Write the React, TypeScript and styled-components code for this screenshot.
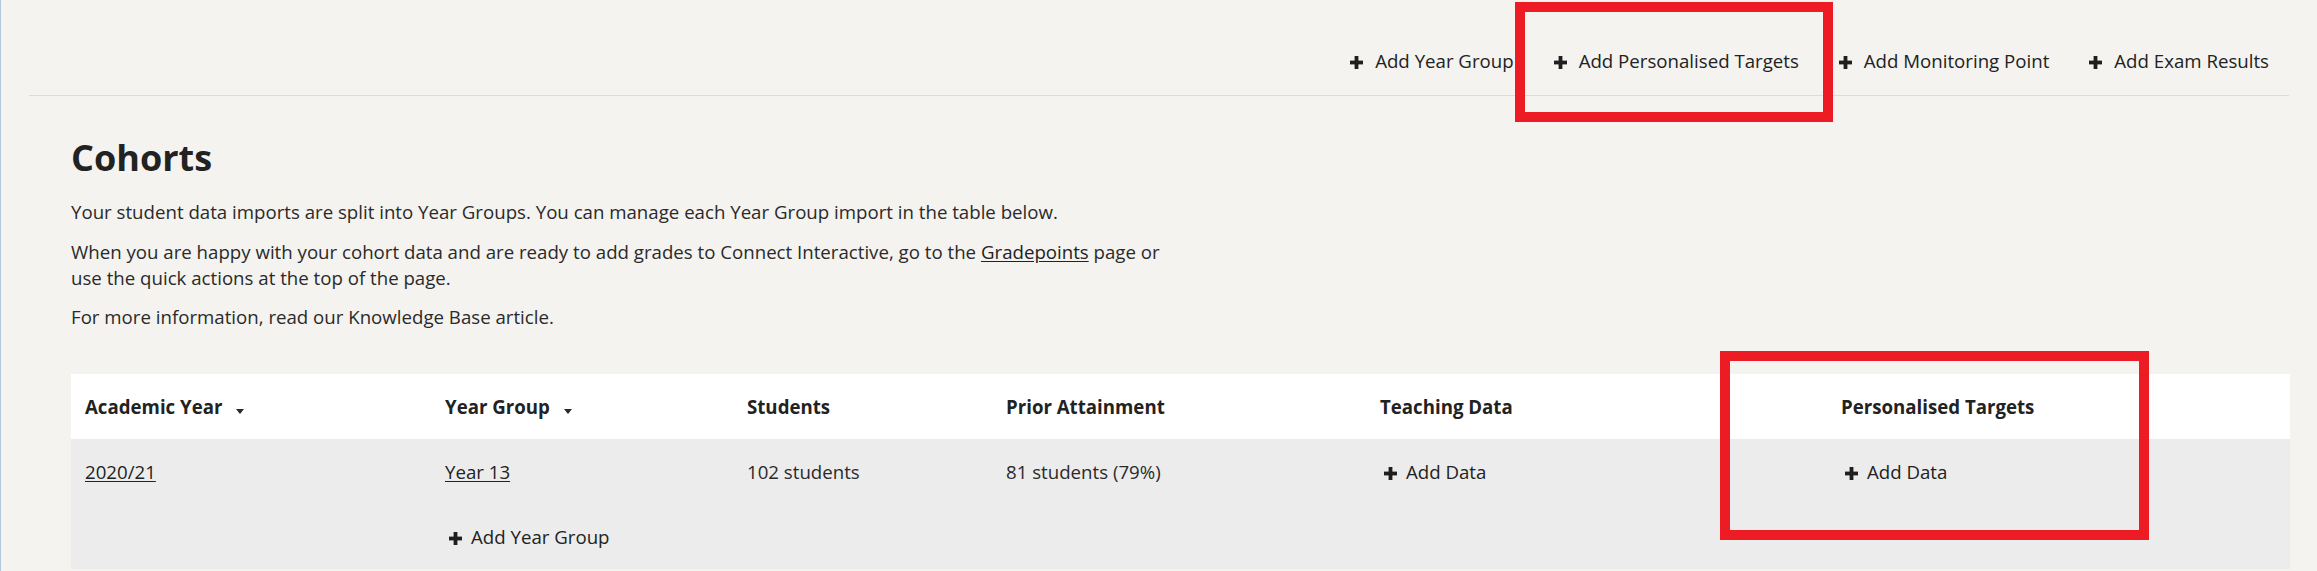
import React from "react";
import styled, { createGlobalStyle } from "styled-components";

const GlobalStyle = createGlobalStyle`
  html, body {
    margin: 0;
    padding: 0;
    background: #f4f3f0;
  }
  body {
    font-family: "Open Sans", "Liberation Sans", sans-serif;
    font-size: 18.67px;
    line-height: 26px;
    color: #222222;
  }
`;

const Page = styled.div`
  position: relative;
  width: 2317px;
  height: 571px;
  overflow: hidden;
  box-sizing: border-box;
  border-left: 1px solid #b3c7dc;
  background: #f4f3f0;
`;

const TopBar = styled.nav`
  display: flex;
  justify-content: flex-end;
  align-items: center;
  gap: 40px;
  margin: 0 28px 0 28px;
  padding: 48px 20px 21px 0;
  border-bottom: 1px solid #dddcd8;
`;

const ActionLink = styled.a`
  display: flex;
  align-items: center;
  gap: 12px;
  color: #222222;
  text-decoration: none;
  white-space: nowrap;
  cursor: pointer;
`;

const PlusSvg = styled.svg<{ $inset?: boolean }>`
  flex: none;
  width: 13px;
  height: 13px;
  margin-top: 2px;
  margin-left: ${(p) => (p.$inset ? "4px" : "0")};
`;

const Plus = ({ inset }: { inset?: boolean }) => (
  <PlusSvg $inset={inset} viewBox="0 0 13 13" aria-hidden="true">
    <rect x="4.6" y="0" width="3.8" height="13" fill="#1f1f1f" />
    <rect x="0" y="4.6" width="13" height="3.8" fill="#1f1f1f" />
  </PlusSvg>
);

const Main = styled.main`
  padding: 40px 27px 0 70px;
`;

const Title = styled.h1`
  margin: 0 0 19px;
  font-size: 36px;
  line-height: 44px;
  font-weight: 700;
  color: #222222;
`;

const Intro = styled.div`
  max-width: 1110px;
  margin-bottom: 44px;
`;

const Para = styled.p`
  margin: 0 0 13.5px;
  color: #2a2a2a;
  &:last-child {
    margin-bottom: 0;
  }
`;

const TextLink = styled.a`
  color: #222222;
  text-decoration: underline;
  text-underline-offset: 2px;
  cursor: pointer;
`;

const Table = styled.table`
  width: 2219px;
  border-collapse: collapse;
  table-layout: fixed;
  background: #ffffff;
`;

const Col = styled.col<{ $w: number }>`
  width: ${(p) => p.$w}px;
`;

const HeadCell = styled.th`
  padding: 20px 14px 19px;
  text-align: left;
  font-weight: 700;
  font-size: 18.67px;
  line-height: 26px;
  color: #222222;
  white-space: nowrap;
`;

const SortArrow = styled.span`
  display: inline-block;
  width: 0;
  height: 0;
  margin-left: 14px;
  border-left: 4.5px solid transparent;
  border-right: 4.5px solid transparent;
  border-top: 5px solid #2a2a2a;
  vertical-align: baseline;
`;

const BodyRow = styled.tr`
  background: #ececec;
`;

const Cell = styled.td`
  padding: 20px 14px 19px;
  vertical-align: top;
  color: #2a2a2a;
  line-height: 26px;
`;

const CellStack = styled.div`
  display: flex;
  flex-direction: column;
  align-items: flex-start;
  gap: 39px;
`;

const InlineAction = styled.a`
  display: flex;
  align-items: center;
  gap: 9px;
  color: #222222;
  text-decoration: none;
  cursor: pointer;
`;

const Highlight = styled.div<{ $x: number; $y: number; $w: number; $h: number }>`
  position: absolute;
  left: ${(p) => p.$x}px;
  top: ${(p) => p.$y}px;
  width: ${(p) => p.$w}px;
  height: ${(p) => p.$h}px;
  box-sizing: border-box;
  border: 10px solid #ed1c24;
  pointer-events: none;
`;

const columns = [360, 302, 259, 374, 461, 463];

export default function App() {
  return (
    <>
      <GlobalStyle />
      <Page>
        <TopBar>
          <ActionLink>
            <Plus />
            Add Year Group
          </ActionLink>
          <ActionLink>
            <Plus />
            Add Personalised Targets
          </ActionLink>
          <ActionLink>
            <Plus />
            Add Monitoring Point
          </ActionLink>
          <ActionLink>
            <Plus />
            Add Exam Results
          </ActionLink>
        </TopBar>
        <Main>
          <Title>Cohorts</Title>
          <Intro>
            <Para>
              Your student data imports are split into Year Groups. You can manage each Year Group
              import in the table below.
            </Para>
            <Para>
              <span>
                When you are happy with your cohort data and are ready to add grades to Connect
                Interactive, go to the{" "}
              </span>
              <TextLink>Gradepoints</TextLink>
              <span> page or</span>
              <br />
              <span>use the quick actions at the top of the page.</span>
            </Para>
            <Para>For more information, read our Knowledge Base article.</Para>
          </Intro>
          <Table>
            <colgroup>
              {columns.map((w, i) => (
                <Col key={i} $w={w} />
              ))}
            </colgroup>
            <thead>
              <tr>
                <HeadCell>
                  Academic Year
                  <SortArrow />
                </HeadCell>
                <HeadCell>
                  Year Group
                  <SortArrow />
                </HeadCell>
                <HeadCell>Students</HeadCell>
                <HeadCell>Prior Attainment</HeadCell>
                <HeadCell>Teaching Data</HeadCell>
                <HeadCell>Personalised Targets</HeadCell>
              </tr>
            </thead>
            <tbody>
              <BodyRow>
                <Cell>
                  <TextLink>2020/21</TextLink>
                </Cell>
                <Cell>
                  <CellStack>
                    <TextLink>Year 13</TextLink>
                    <InlineAction>
                      <Plus inset />
                      Add Year Group
                    </InlineAction>
                  </CellStack>
                </Cell>
                <Cell>102 students</Cell>
                <Cell>81 students (79%)</Cell>
                <Cell>
                  <InlineAction>
                    <Plus inset />
                    Add Data
                  </InlineAction>
                </Cell>
                <Cell>
                  <InlineAction>
                    <Plus inset />
                    Add Data
                  </InlineAction>
                </Cell>
              </BodyRow>
            </tbody>
          </Table>
        </Main>
        <Highlight $x={1514} $y={2} $w={318} $h={120} />
        <Highlight $x={1719} $y={351} $w={429} $h={189} />
      </Page>
    </>
  );
}
